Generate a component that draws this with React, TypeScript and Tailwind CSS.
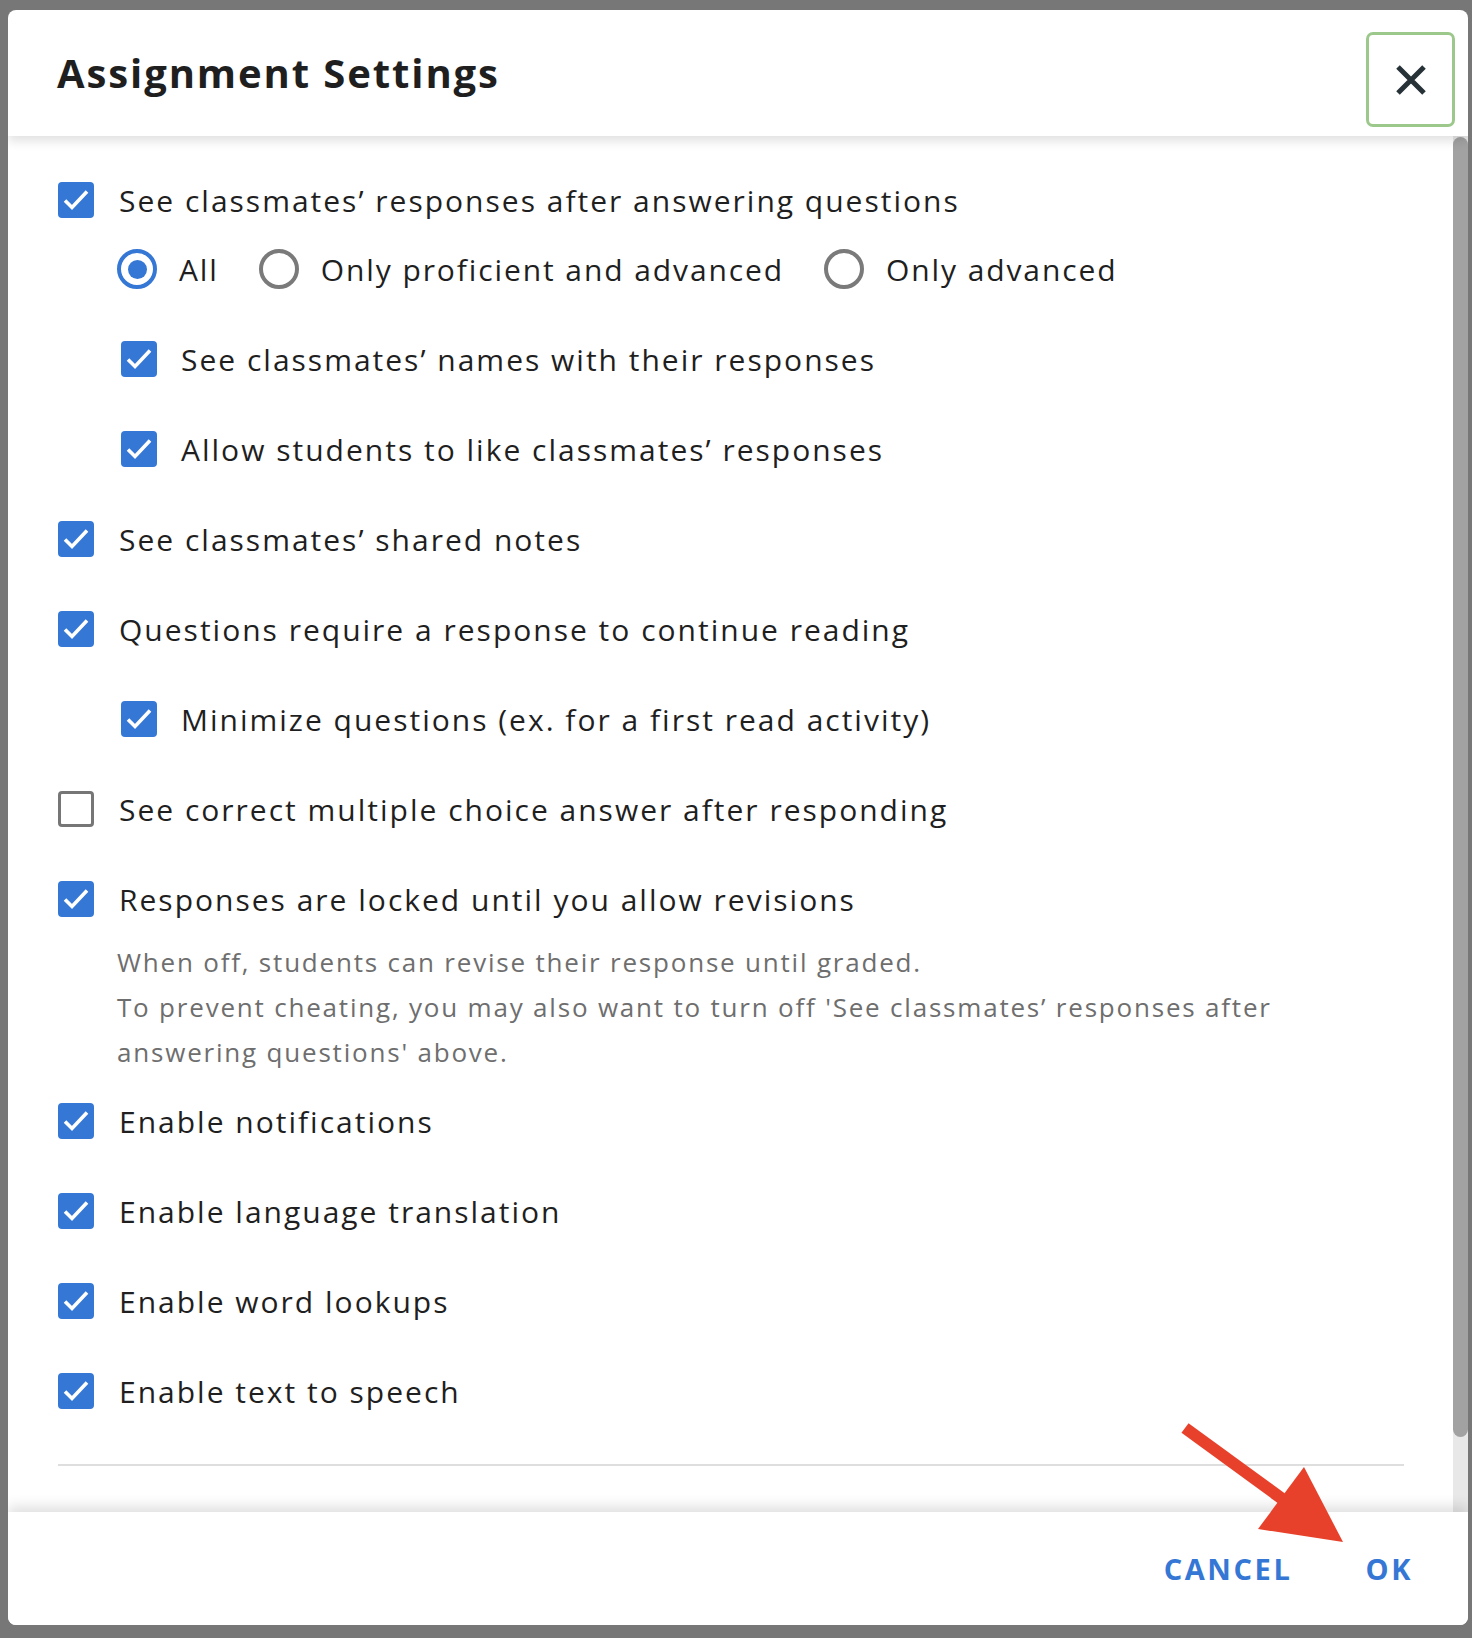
import React from "react";

const font = { fontFamily: '"Open Sans", "Noto Sans", sans-serif' };

const CheckBox = ({ checked }: { checked: boolean }) =>
  checked ? (
    <span className="flex h-[36px] w-[36px] shrink-0 items-center justify-center rounded-[4px] bg-[#3577d4]">
      <svg width="36" height="36" viewBox="0 0 36 36" fill="none">
        <path d="M7 18.5 L14 25.5 L29 9.5" stroke="#ffffff" strokeWidth="3.6" />
      </svg>
    </span>
  ) : (
    <span className="h-[36px] w-[36px] shrink-0 rounded-[4px] border-[3px] border-[#767676] bg-white" />
  );

const Radio = ({ checked }: { checked: boolean }) =>
  checked ? (
    <span className="flex h-[40px] w-[40px] shrink-0 items-center justify-center rounded-full border-[4px] border-[#3577d4]">
      <span className="h-[19px] w-[19px] rounded-full bg-[#3577d4]" />
    </span>
  ) : (
    <span className="h-[40px] w-[40px] shrink-0 rounded-full border-[4px] border-[#7a7a7a]" />
  );

const Row = ({
  label,
  checked = true,
  sub = false,
}: {
  label: string;
  checked?: boolean;
  sub?: boolean;
}) => (
  <div className={sub ? "flex h-[90px] items-center gap-[24px] pl-[63px]" : "flex h-[90px] items-center gap-[25px]"}>
    <CheckBox checked={checked} />
    <span className="whitespace-nowrap text-[30px] tracking-[2px] text-[#1f1f1f]">{label}</span>
  </div>
);

const radios = [
  { label: "All", checked: true },
  { label: "Only proficient and advanced", checked: false },
  { label: "Only advanced", checked: false },
];

export default function App() {
  return (
    <div className="relative h-[1638px] w-[1472px] overflow-hidden bg-[#777777]" style={font}>
      <div className="ml-[8px] mt-[10px] flex h-[1615px] w-[1460px] flex-col overflow-hidden rounded-[8px] bg-white">
        {/* header */}
        <div className="relative z-10 flex h-[126px] shrink-0 items-center justify-between pl-[49px] pr-[13px] shadow-[0_5px_10px_rgba(0,0,0,0.12)]">
          <h1 className="text-[40px] font-bold tracking-[1.9px] text-[#1f1f1f]">Assignment Settings</h1>
          <button className="mt-[13px] flex h-[95px] w-[89px] items-center justify-center rounded-[7px] border-[3px] border-[#9cc98b] bg-white">
            <svg width="32" height="32" viewBox="0 0 32 32">
              <path d="M3 3 L29 29 M29 3 L3 29" stroke="#263238" strokeWidth="5" />
            </svg>
          </button>
        </div>

        {/* body */}
        <div className="flex min-h-0 flex-1">
          <div className="min-w-0 flex-1 overflow-hidden pl-[50px] pr-[49px] pt-[19px]">
            <Row label="See classmates’ responses after answering questions" />
            <div className="mb-[21px] flex h-[48px] items-center gap-[40px] pl-[59px]">
              {radios.map((r) => (
                <div key={r.label} className="flex items-center gap-[22px]">
                  <Radio checked={r.checked} />
                  <span className="whitespace-nowrap text-[30px] tracking-[1.9px] text-[#1f1f1f]">{r.label}</span>
                </div>
              ))}
            </div>
            <Row sub label="See classmates’ names with their responses" />
            <Row sub label="Allow students to like classmates’ responses" />
            <Row label="See classmates’ shared notes" />
            <Row label="Questions require a response to continue reading" />
            <Row sub label="Minimize questions (ex. for a first read activity)" />
            <Row checked={false} label="See correct multiple choice answer after responding" />
            <Row label="Responses are locked until you allow revisions" />
            <div className="-mt-[4px] mb-[1px] whitespace-nowrap pl-[59px] text-[26px] leading-[45px] tracking-[1.8px] text-[#6e6e6e]">
              <p>When off, students can revise their response until graded.</p>
              <p>
                To prevent cheating, you may also want to turn off 'See classmates’ responses after
                <br />
                answering questions' above.
              </p>
            </div>
            <Row label="Enable notifications" />
            <Row label="Enable language translation" />
            <Row label="Enable word lookups" />
            <Row label="Enable text to speech" />
            <div className="mt-[28px] h-[2px] w-full bg-[#dedede]" />
          </div>
          {/* scrollbar */}
          <div className="flex w-[15px] shrink-0 flex-col bg-[#e8e8e8]">
            <div className="mt-[1px] h-[1300px] rounded-full bg-[#a2a2a2]" />
          </div>
        </div>

        {/* footer */}
        <div className="relative z-10 flex h-[113px] shrink-0 items-center justify-end gap-[73px] bg-white pr-[55px] shadow-[0_-6px_12px_rgba(0,0,0,0.12)]">
          <button className="text-[29px] font-bold tracking-[2.6px] text-[#3577d4]">CANCEL</button>
          <button className="text-[29px] font-bold tracking-[2.6px] text-[#3577d4]">OK</button>
        </div>
      </div>

      {/* annotation arrow */}
      <svg className="pointer-events-none absolute left-0 top-0 z-20" width="1472" height="1638">
        <line x1="1185" y1="1428" x2="1292" y2="1506" stroke="#e8412b" strokeWidth="12" />
        <polygon points="1258,1529 1304,1467 1343,1542" fill="#e8412b" />
      </svg>
    </div>
  );
}
